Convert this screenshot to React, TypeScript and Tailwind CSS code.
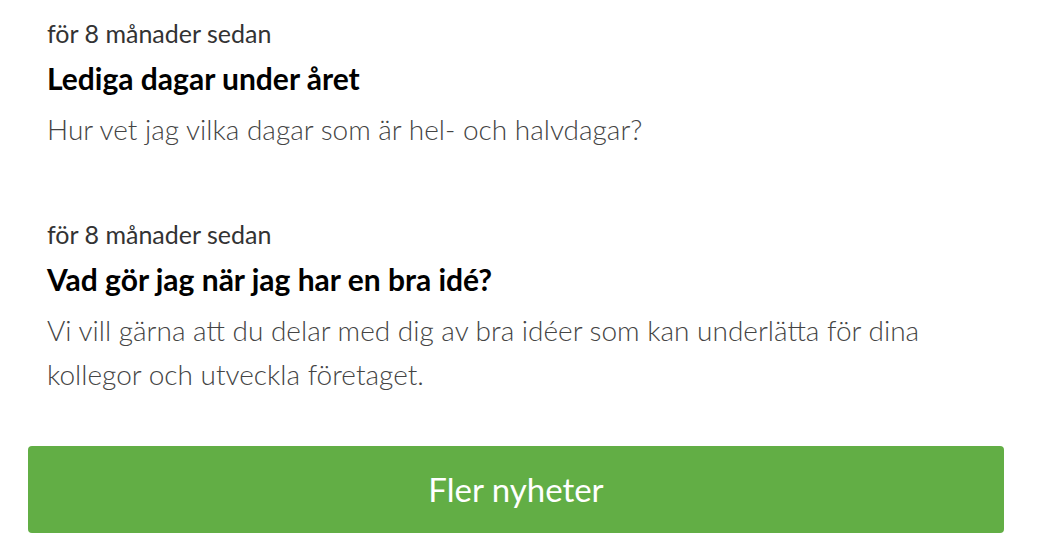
import React from 'react';

const news = [
  {
    when: 'för 8 månader sedan',
    title: 'Lediga dagar under året',
    body: 'Hur vet jag vilka dagar som är hel- och halvdagar?',
  },
  {
    when: 'för 8 månader sedan',
    title: 'Vad gör jag när jag har en bra idé?',
    body: 'Vi vill gärna att du delar med dig av bra idéer som kan underlätta för dina kollegor och utveckla företaget.',
  },
];

export default function App() {
  return (
    <div className="w-[1038px] h-[552px] bg-white overflow-hidden font-['Lato',sans-serif]">
      <div className="flex flex-col gap-[68px] pl-[47px] pr-[80px] pt-[18px]">
        {news.map((n, i) => (
          <div key={i} className="flex flex-col">
            <span className="text-[25px] leading-[30px] text-[#333]">{n.when}</span>
            <h2 className="mt-[12px] text-[30px] leading-[36px] font-bold text-black">{n.title}</h2>
            <p className="mt-[11px] text-[28px] leading-[44px] font-light text-[#444] max-w-[900px]">{n.body}</p>
          </div>
        ))}
      </div>
      <div className="pl-[28px] pr-[34px] mt-[50px]">
        <button className="w-full h-[87px] rounded-[4px] bg-[#62ae45] text-white text-[33px]">
          Fler nyheter
        </button>
      </div>
    </div>
  );
}
